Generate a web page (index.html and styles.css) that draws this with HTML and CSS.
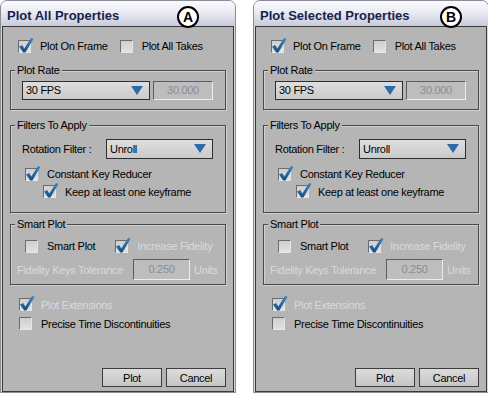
FILE: index.html
```html
<!DOCTYPE html>
<html lang="en">
<head>
  <meta charset="UTF-8" />
  <title>Plot Properties</title>
  <link rel="stylesheet" href="styles.css">
</head>
<body>
  <svg class="defs" width="0" height="0">
    <defs>
      <linearGradient id="tickFill" x1="0" y1="0" x2="0" y2="1">
        <stop offset="0" stop-color="#3f86c4"/>
        <stop offset="1" stop-color="#164d80"/>
      </linearGradient>
      <symbol id="tick" viewBox="0 0 16 17">
        <path d="M1 9.5 L4.2 8 L6.3 11.6 L13 1 L15.6 1.8 L7.4 15.6 L5.2 15.6 Z" fill="url(#tickFill)"/>
      </symbol>
    </defs>
  </svg>

  <div class="page">
    <!-- A -->
    <div class="dialog">
      <div class="titlebar">
        <span class="title">Plot All Properties</span>
        <span class="tag tag-a">A</span>
      </div>
      <div class="dialog-body">
        <div class="row first-row">
          <span class="check"><span class="box"><svg class="tick"><use href="#tick"/></svg></span>Plot On Frame</span>
          <span class="check"><span class="box"></span>Plot All Takes</span>
        </div>

        <div class="group rate-group">
          <span class="group-title">Plot Rate</span>
          <div class="row rate-row">
            <div class="select rate-select">30 FPS<span class="arrow"></span></div>
            <div class="field rate-field">30.000</div>
          </div>
        </div>

        <div class="group filter-group">
          <span class="group-title">Filters To Apply</span>
          <div class="row rotation-row">
            <span>Rotation Filter :</span>
            <div class="select rotation-select">Unroll<span class="arrow"></span></div>
          </div>
          <div class="row reducer-row">
            <span class="check"><span class="box"><svg class="tick"><use href="#tick"/></svg></span>Constant Key Reducer</span>
          </div>
          <div class="row keep-row">
            <span class="check"><span class="box"><svg class="tick"><use href="#tick"/></svg></span>Keep at least one keyframe</span>
          </div>
        </div>

        <div class="group smart-group">
          <span class="group-title">Smart Plot</span>
          <div class="row smart-row">
            <span class="check smart-check"><span class="box"></span>Smart Plot</span>
            <span class="check disabled"><span class="box"><svg class="tick"><use href="#tick"/></svg></span>Increase Fidelity</span>
          </div>
          <div class="row tolerance-row">
            <span class="tolerance-label disabled">Fidelity Keys Tolerance</span>
            <div class="field tolerance-field">0.250</div>
            <span class="units disabled">Units</span>
          </div>
        </div>

        <div class="row loose-row ext-row">
          <span class="check disabled"><span class="box"><svg class="tick"><use href="#tick"/></svg></span>Plot Extensions</span>
        </div>
        <div class="row loose-row">
          <span class="check"><span class="box"></span>Precise Time Discontinuities</span>
        </div>

        <div class="buttons">
          <button class="btn">Plot</button>
          <button class="btn">Cancel</button>
        </div>
      </div>
    </div>

    <!-- B -->
    <div class="dialog">
      <div class="titlebar">
        <span class="title">Plot Selected Properties</span>
        <span class="tag tag-b">B</span>
      </div>
      <div class="dialog-body">
        <div class="row first-row">
          <span class="check"><span class="box"><svg class="tick"><use href="#tick"/></svg></span>Plot On Frame</span>
          <span class="check"><span class="box"></span>Plot All Takes</span>
        </div>

        <div class="group rate-group">
          <span class="group-title">Plot Rate</span>
          <div class="row rate-row">
            <div class="select rate-select">30 FPS<span class="arrow"></span></div>
            <div class="field rate-field">30.000</div>
          </div>
        </div>

        <div class="group filter-group">
          <span class="group-title">Filters To Apply</span>
          <div class="row rotation-row">
            <span>Rotation Filter :</span>
            <div class="select rotation-select">Unroll<span class="arrow"></span></div>
          </div>
          <div class="row reducer-row">
            <span class="check"><span class="box"><svg class="tick"><use href="#tick"/></svg></span>Constant Key Reducer</span>
          </div>
          <div class="row keep-row">
            <span class="check"><span class="box"><svg class="tick"><use href="#tick"/></svg></span>Keep at least one keyframe</span>
          </div>
        </div>

        <div class="group smart-group">
          <span class="group-title">Smart Plot</span>
          <div class="row smart-row">
            <span class="check smart-check"><span class="box"></span>Smart Plot</span>
            <span class="check disabled"><span class="box"><svg class="tick"><use href="#tick"/></svg></span>Increase Fidelity</span>
          </div>
          <div class="row tolerance-row">
            <span class="tolerance-label disabled">Fidelity Keys Tolerance</span>
            <div class="field tolerance-field">0.250</div>
            <span class="units disabled">Units</span>
          </div>
        </div>

        <div class="row loose-row ext-row">
          <span class="check disabled"><span class="box"><svg class="tick"><use href="#tick"/></svg></span>Plot Extensions</span>
        </div>
        <div class="row loose-row">
          <span class="check"><span class="box"></span>Precise Time Discontinuities</span>
        </div>

        <div class="buttons">
          <button class="btn">Plot</button>
          <button class="btn">Cancel</button>
        </div>
      </div>
    </div>
  </div>
</body>
</html>
```

FILE: styles.css
```css
body {
  margin: 0;
  background: #fff;
  font-family: "Liberation Sans", Arial, sans-serif;
  font-size: 11px;
  letter-spacing: -0.3px;
  color: #000;
}

.defs {
  position: absolute;
}

.page {
  display: flex;
  gap: 17px;
  width: 488px;
  height: 395px;
  overflow: hidden;
}

.dialog {
  flex: 0 0 236px;
  height: 393px;
  box-sizing: border-box;
  border: 1px solid #8c8c96;
  border-radius: 7px 7px 0 0;
  background: #d6d6de;
  display: flex;
  flex-direction: column;
  position: relative;
}

.titlebar {
  height: 25px;
  box-sizing: border-box;
  padding: 4px 0 0 6px;
  display: flex;
  align-items: center;
  background: linear-gradient(#fbfbfe, #e8e8f2 50%, #c8cadb);
  border-radius: 6px 6px 0 0;
}

.title {
  font-size: 13px;
  font-weight: bold;
  letter-spacing: 0;
  color: #17234a;
}

/* callout letters */
.tag {
  position: absolute;
  top: 5px;
  width: 22px;
  height: 22px;
  box-sizing: border-box;
  border: 2.5px solid #000;
  border-radius: 50%;
  background: #fff;
  font-size: 14px;
  font-weight: bold;
  letter-spacing: 0;
  display: flex;
  align-items: center;
  justify-content: center;
}

.tag-a { left: 176px; }
.tag-b { left: 186px; }

.dialog-body {
  flex: 1;
  margin: 0 1px;
  border: 1px solid #3a3a3a;
  background: #b5b5b5;
  display: flex;
  flex-direction: column;
  padding: 9px 7px 4px;
}

.row {
  display: flex;
  align-items: center;
}

.first-row {
  height: 20px;
  padding-left: 8px;
}

.first-row .check:first-child {
  margin-right: 12px;
}

.check {
  display: inline-flex;
  align-items: center;
  white-space: nowrap;
}

.box {
  position: relative;
  width: 13px;
  height: 13px;
  box-sizing: border-box;
  margin-right: 9px;
  border: 1px solid;
  border-color: #6c6c6c #e6e6e6 #e6e6e6 #6c6c6c;
  background: linear-gradient(#cfcfcf, #e2e2e2);
}

.tick {
  position: absolute;
  left: -1px;
  top: -4px;
  width: 16px;
  height: 17px;
}

.disabled {
  color: #dadada;
}

.group {
  position: relative;
  border: 1px solid #4a4a4a;
  box-shadow: inset 1px 1px 0 #d0d0d0, 1px 1px 0 #d0d0d0;
}

.group-title {
  position: absolute;
  top: -7px;
  left: 4px;
  padding: 0 2px;
  line-height: 13px;
  background: #b5b5b5;
}

.rate-group {
  margin-top: 14px;
  padding: 10px 12px 9px 11px;
}

.select {
  position: relative;
  height: 19px;
  box-sizing: border-box;
  border: 1px solid #2e2e2e;
  background: linear-gradient(#dedede, #cacaca);
  padding-left: 3px;
  line-height: 17px;
}

.arrow {
  position: absolute;
  right: 6px;
  top: 4px;
  width: 0;
  height: 0;
  border-left: 6px solid transparent;
  border-right: 6px solid transparent;
  border-top: 9px solid #2c6ca4;
}

.rate-select {
  flex: 1;
  margin-right: 3px;
}

.field {
  box-sizing: border-box;
  border: 1px solid;
  border-color: #5c5c5c #ececec #ececec #5c5c5c;
  background: #bdbdbd;
  color: #8a8c96;
  text-align: center;
}

.rate-field {
  width: 60px;
  height: 19px;
  line-height: 17px;
}

.filter-group {
  margin-top: 15px;
  padding: 13px 12px 12px 11px;
}

.rotation-row {
  height: 20px;
}

.rotation-select {
  width: 107px;
  height: 20px;
  margin-left: auto;
  line-height: 18px;
}

.reducer-row {
  height: 18px;
  margin-top: 6px;
  padding-left: 3px;
}

.keep-row {
  height: 17px;
  padding-left: 21px;
}

.smart-group {
  margin-top: 11px;
  padding: 12px 6px 4px;
}

.smart-row {
  height: 18px;
  padding-left: 8px;
}

.smart-check {
  margin-right: 20px;
}

.tolerance-row {
  height: 21px;
  margin-top: 4px;
}

.tolerance-label {
  width: 116px;
}

.tolerance-field {
  width: 57px;
  height: 21px;
  line-height: 19px;
}

.units {
  margin-left: 4px;
}

.loose-row {
  height: 19px;
  padding-left: 9px;
}

.ext-row {
  margin-top: 10px;
}

.buttons {
  margin-top: auto;
  display: flex;
  justify-content: flex-end;
  gap: 4px;
}

.btn {
  width: 60px;
  height: 19px;
  padding: 0;
  border: 1px solid #3c3c3c;
  background: linear-gradient(#dcdcdc, #c6c6c6);
  font-family: inherit;
  font-size: 11px;
  letter-spacing: -0.3px;
  color: #000;
}
```
